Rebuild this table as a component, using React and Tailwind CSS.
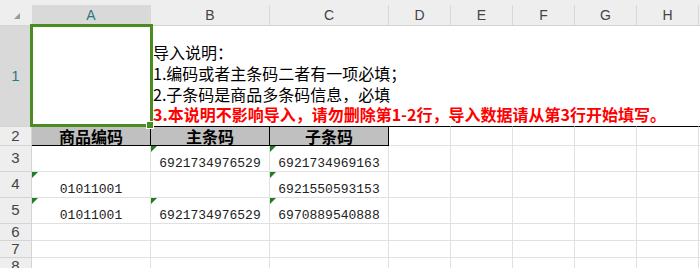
import React from "react";

const W = [119, 119, 119, 62, 62, 62, 62, 62, 62];
const COLS = ["A", "B", "C", "D", "E", "F", "G", "H", ""];
const SANS = { fontFamily: '"Liberation Sans", Arial, sans-serif' };
const CJK = { fontFamily: '"Noto Sans CJK SC", "Noto Sans", sans-serif' };
const MONO = { fontFamily: '"Liberation Mono", "DejaVu Sans Mono", monospace' };

function Tri() {
  return (
    <svg className="absolute left-0 top-0" width="6" height="6" viewBox="0 0 6 6">
      <polygon points="0,0 6,0 0,6" fill="#1f7e1f" />
    </svg>
  );
}

function RowHead({ n, h, selected, extra = "" }) {
  return (
    <div
      className={`w-[32px] shrink-0 flex items-center justify-center border-r border-b border-[#d4d4d4] text-[15px] ${
        selected ? "bg-[#d9d9d9] text-[#2a7b78]" : "bg-[#eeeeee] text-[#444]"
      } ${h} ${extra}`}
      style={SANS}
    >
      {n}
    </div>
  );
}

function DataRow({ n, cells }) {
  return (
    <div className="flex h-[26px]">
      <RowHead n={n} h="h-[26px]" />
      {W.map((w, i) => {
        const c = cells[i];
        return (
          <div
            key={i}
            className="relative shrink-0 h-[26px] border-r border-b border-[#e1e1e1] flex items-end justify-center pb-0 text-[13px] leading-[15px] text-[#222]"
            style={{ width: w, ...MONO }}
          >
            {c && c.tri && <Tri />}
            {c && c.v}
          </div>
        );
      })}
    </div>
  );
}

function EmptyRow({ n }) {
  return (
    <div className="flex h-[17px]">
      <RowHead n={n} h="h-[17px]" extra="leading-[16px] text-[14px]" />
      {W.map((w, i) => (
        <div key={i} className="shrink-0 h-[17px] border-r border-b border-[#e1e1e1]" style={{ width: w }} />
      ))}
    </div>
  );
}

export default function App() {
  return (
    <div className="relative w-[700px] h-[268px] overflow-hidden bg-white">
      {/* column header */}
      <div className="flex h-[26px] bg-[#eeeeee] border-b border-[#d4d4d4]">
        <div className="relative w-[32px] shrink-0">
          <svg className="absolute left-[14px] top-[13px]" width="6" height="6" viewBox="0 0 6 6">
            <polygon points="6,0 6,6 0,6" fill="#9a9a9a" />
          </svg>
        </div>
        {W.map((w, i) => (
          <div
            key={i}
            className={`shrink-0 mt-[5px] h-[20px] flex items-center justify-center text-[14px] border-r border-[#d8d8d8] ${
              i === 0 ? "bg-[#d9d9d9] text-[#2a7b78]" : "text-[#444]"
            }`}
            style={{ width: w, ...SANS }}
          >
            {COLS[i]}
          </div>
        ))}
      </div>

      {/* row 1 */}
      <div className="flex h-[100px]">
        <div
          className="w-[32px] shrink-0 h-[100px] flex items-center justify-center bg-[#d9d9d9] text-[#2a7b78] text-[15px] border-r border-[#d4d4d4]"
          style={SANS}
        >
          1
        </div>
        <div className="w-[119px] shrink-0 h-[100px] border-r border-[#e1e1e1]" />
        <div
          className="flex-1 h-[100px] flex flex-col justify-end pl-[2px] pb-[1px] whitespace-nowrap text-[16px] leading-[20.7px] text-black"
          style={CJK}
        >
          <div>导入说明：</div>
          <div>1.编码或者主条码二者有一项必填；</div>
          <div>2.子条码是商品多条码信息，必填</div>
          <div className="font-bold text-[#ff0000] text-[16px]">
            3.本说明不影响导入，请勿删除第1-2行，导入数据请从第3行开始填写。
          </div>
        </div>
      </div>

      {/* row 2 */}
      <div className="flex h-[20px]">
        <div
          className="w-[32px] shrink-0 h-[20px] flex items-center justify-center bg-[#eeeeee] text-[#444] text-[15px] border-r border-t border-b border-[#d4d4d4]"
          style={SANS}
        >
          2
        </div>
        {["商品编码", "主条码", "子条码"].map((t, i) => (
          <div
            key={i}
            className="w-[119px] shrink-0 h-[20px] flex items-center justify-center bg-[#c0c0c0] border-r border-t border-b border-black text-[16px] font-bold leading-none text-black"
            style={CJK}
          >
            {t}
          </div>
        ))}
        {W.slice(3).map((w, i) => (
          <div key={i} className="shrink-0 h-[20px] border-r border-b border-t border-[#e1e1e1] border-t-black" style={{ width: w }} />
        ))}
      </div>

      <DataRow n="3" cells={[null, { v: "6921734976529", tri: true }, { v: "6921734969163", tri: true }]} />
      <DataRow n="4" cells={[{ v: "01011001", tri: true }, null, { v: "6921550593153", tri: true }]} />
      <DataRow n="5" cells={[{ v: "01011001", tri: true }, { v: "6921734976529", tri: true }, { v: "6970889540888", tri: true }]} />
      <EmptyRow n="6" />
      <EmptyRow n="7" />
      <EmptyRow n="8" />

      {/* selection overlay */}
      <div className="absolute left-[30px] top-[24px] w-[123px] h-[103px] border-[3px] border-[#4a8c22] pointer-events-none" />
      <div className="absolute left-[146px] top-[121px] w-[8px] h-[8px] bg-[#4a8c22] border border-white pointer-events-none" />
    </div>
  );
}
